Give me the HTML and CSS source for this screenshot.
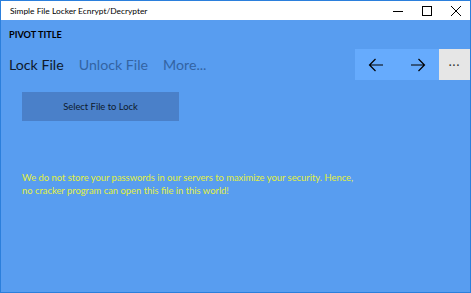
FILE: index.html
```html
<!DOCTYPE html>
<html lang="en">
<head>
    <meta charset="UTF-8">
    <title>Simple File Locker Ecnrypt/Decrypter</title>
    <link rel="stylesheet" href="styles.css">
</head>
<body>
    <div class="window">
        <!-- Title bar -->
        <div class="titlebar">
            <span class="app-title">Simple File Locker Ecnrypt/Decrypter</span>
            <div class="caption-buttons">
                <span class="caption-btn">
                    <svg width="10" height="10" viewBox="0 0 10 10"><path d="M0 5.5h10" stroke="#000" stroke-width="1"/></svg>
                </span>
                <span class="caption-btn">
                    <svg width="10" height="10" viewBox="0 0 10 10"><rect x="0.5" y="0.5" width="9" height="9" fill="none" stroke="#000" stroke-width="1"/></svg>
                </span>
                <span class="caption-btn">
                    <svg width="10" height="10" viewBox="0 0 10 10"><path d="M0 0L10 10M10 0L0 10" stroke="#000" stroke-width="1"/></svg>
                </span>
            </div>
        </div>

        <!-- App content -->
        <div class="content">
            <div class="pivot-title">PIVOT TITLE</div>

            <div class="pivot-row">
                <div class="pivot-headers">
                    <span class="pivot-item active">Lock File</span>
                    <span class="pivot-item">Unlock File</span>
                    <span class="pivot-item">More...</span>
                </div>

                <div class="command-bar">
                    <span class="cmd-btn">
                        <svg width="16" height="14" viewBox="0 0 16 14"><path d="M15 7H1.5M7.5 1L1.5 7l6 6" fill="none" stroke="#000" stroke-width="1.2"/></svg>
                    </span>
                    <span class="cmd-btn">
                        <svg width="16" height="14" viewBox="0 0 16 14"><path d="M1 7h13.5M8.5 1l6 6-6 6" fill="none" stroke="#000" stroke-width="1.2"/></svg>
                    </span>
                    <span class="cmd-more">&middot;&middot;&middot;</span>
                </div>
            </div>

            <div class="pivot-body">
                <button class="select-btn">Select File to Lock</button>

                <p class="notice">We do not store your passwords in our servers to maximize your security. Hence,<br>no cracker program can open this file in this world!</p>
            </div>
        </div>
    </div>
</body>
</html>
```

FILE: styles.css
```css
* {
    margin: 0;
    padding: 0;
    box-sizing: border-box;
}

body {
    font-family: Lato, "Noto Sans", sans-serif;
    background-color: #fff;
    color: #000;
}

.window {
    width: 471px;
    height: 293px;
    border: 1px solid #2b7fdc;
    display: flex;
    flex-direction: column;
    background-color: #589df0;
}

/* Title bar */
.titlebar {
    height: 19px;
    background-color: #fff;
    display: flex;
    align-items: center;
    justify-content: space-between;
}

.app-title {
    font-size: 8.4px;
    padding-left: 9px;
    color: #000;
}

.caption-buttons {
    display: flex;
    height: 100%;
}

.caption-btn {
    width: 29px;
    display: flex;
    align-items: center;
    justify-content: center;
}

/* Content */
.content {
    flex-grow: 1;
    display: flex;
    flex-direction: column;
}

.pivot-title {
    font-size: 9.2px;
    font-weight: bold;
    padding: 9px 0 0 8px;
    height: 29px;
}

.pivot-row {
    display: flex;
    justify-content: space-between;
    align-items: center;
    height: 31px;
}

.pivot-headers {
    display: flex;
    gap: 15px;
    padding-left: 8px;
    padding-bottom: 1px;
}

.pivot-item {
    font-size: 14.2px;
    color: #2d5a96;
    opacity: 0.85;
}

.pivot-item.active {
    color: #0e1a2c;
    opacity: 1;
}

.command-bar {
    display: flex;
    height: 31px;
    background-color: #66abfd;
}

.cmd-btn {
    width: 42px;
    display: flex;
    align-items: center;
    justify-content: center;
}

.cmd-more {
    width: 31px;
    background-color: #e6e6e6;
    display: flex;
    align-items: center;
    justify-content: center;
    font-size: 11px;
    color: #333;
    letter-spacing: 1px;
}

.pivot-body {
    padding: 12px 0 0 21px;
}

.select-btn {
    width: 157px;
    height: 29px;
    border: none;
    background-color: #4a80c9;
    color: #0e1a2c;
    font-family: Lato, "Noto Sans", sans-serif;
    font-size: 9.4px;
}

.notice {
    margin-top: 50px;
    color: #e2f03c;
    font-size: 9.4px;
    line-height: 13px;
}
```
